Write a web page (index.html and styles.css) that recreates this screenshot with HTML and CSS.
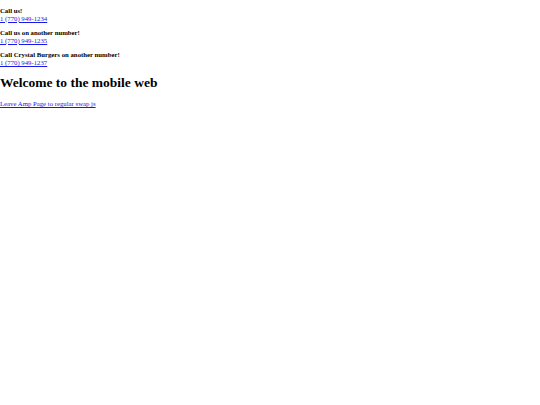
FILE: index.html
```html
<!DOCTYPE html>
<html>
<head>
<meta charset="utf-8">
<link rel="stylesheet" href="styles.css">
</head>
<body>
<p class="call"><b>Call us!</b><br><a href="#">1 (770) 949-1234</a></p>
<p class="call"><b>Call us on another number!</b><br><a href="#">1 (770) 949-1235</a></p>
<p class="call"><b>Call Crystal Burgers on another number!</b><br><a href="#">1 (770) 949-1237</a></p>
<h1 class="title">Welcome to the mobile web</h1>
<a class="leave" href="#">Leave Amp Page to regular swap js</a>
</body>
</html>
```
FILE: styles.css
```css
html, body {
  margin: 0;
  padding: 0;
  background: #fff;
}
body {
  font-family: "Liberation Serif", "Times New Roman", serif;
  font-size: 6.75px;
  line-height: 7.76px;
  color: #000;
}
.call {
  margin: 6.75px 0;
}
.call a, .leave {
  color: #1a1ae6;
  text-decoration: underline;
  text-decoration-thickness: 1px;
}
.title {
  font-size: 13.5px;
  line-height: 15.53px;
  font-weight: bold;
  margin: 8.3px 0 9.8px;
}
```
